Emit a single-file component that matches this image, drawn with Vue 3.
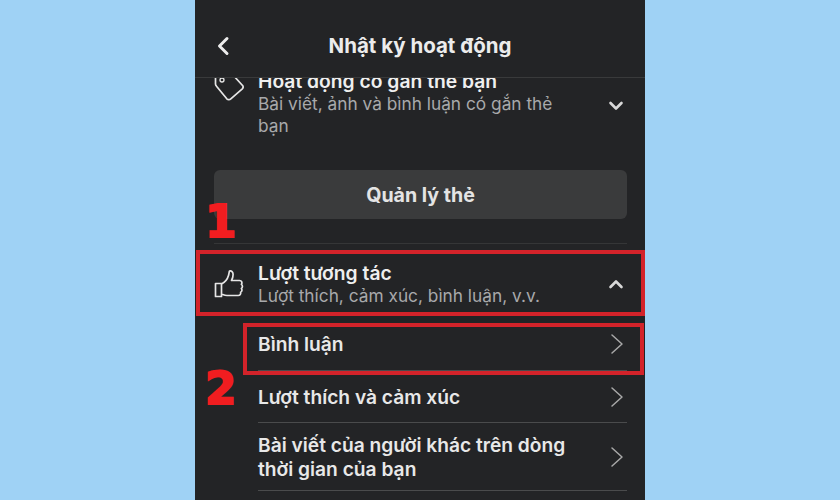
<script setup>
const subItems = [
  { id: 1, lines: ['Bình luận'], cls: 'row-a' },
  { id: 2, lines: ['Lượt thích và cảm xúc'], cls: 'row-b' },
  { id: 3, lines: ['Bài viết của người khác trên dòng', 'thời gian của bạn'], cls: 'row-c' }
]
</script>

<template>
  <div class="page">
    <div class="phone">
      <header class="header">
        <svg class="back" width="14" height="20" viewBox="0 0 14 20" fill="none">
          <path d="M11 2.500 3.500 10l7.500 7.500" stroke="#ececec" stroke-width="3" stroke-linecap="round" stroke-linejoin="round" />
        </svg>
        <h1 class="title">Nhật ký hoạt động</h1>
      </header>

      <div class="scroll">
        <section class="group tag-group">
          <svg class="icon tag-icon" width="32" height="32" viewBox="0 0 32 32" fill="none">
            <path d="M1.500 2V11a3 3 0 0 0 1 2.200L12.800 25.800a2.800 2.800 0 0 0 4 0L28.300 15.800a2.600 2.600 0 0 0 0-3.600L19 2" stroke="#e6e6e6" stroke-width="1.700" stroke-linejoin="round" />
            <circle cx="8" cy="7" r="2" stroke="#e6e6e6" stroke-width="1.300" />
          </svg>
          <div class="text">
            <div class="name">Hoạt động có gắn thẻ bạn</div>
            <div class="desc">Bài viết, ảnh và bình luận có gắn thẻ<br />bạn</div>
          </div>
          <svg class="caret" width="16" height="12" viewBox="0 0 16 12" fill="none">
            <path d="M2.500 3 8 8.500 13.500 3" stroke="#d8d8d8" stroke-width="2.600" stroke-linecap="round" stroke-linejoin="round" />
          </svg>
        </section>

        <button class="manage">Quản lý thẻ</button>
        <div class="divider top-divider"></div>

        <section class="group like-group">
          <svg class="icon" width="30" height="30" viewBox="0 0 30 30" fill="none">
            <path d="M1.500 14.500h6v13h-6zM7.500 15c3 -1.500 6 -5 7 -8.500.5-1.800.6-3.500 1-4.500 2-.6 3.600 1 3.600 3.500 0 2.500-.8 4.500-1.600 6h8c2.300 0 3.100 2.400 1.900 3.900 1.400 1 1.400 3.100 0 4.100.9 1.200.7 3-.8 3.800.5 1.700-.6 3.200-2.400 3.200H13c-2.500 0-4-1-5.500-1.500" stroke="#e6e6e6" stroke-width="1.700" stroke-linejoin="round" />
          </svg>
          <div class="text">
            <div class="name">Lượt tương tác</div>
            <div class="desc">Lượt thích, cảm xúc, bình luận, v.v.</div>
          </div>
          <svg class="caret" width="16" height="12" viewBox="0 0 16 12" fill="none">
            <path d="M2.500 9 8 3.500 13.500 9" stroke="#d8d8d8" stroke-width="2.600" stroke-linecap="round" stroke-linejoin="round" />
          </svg>
        </section>

        <ul class="list">
          <li v-for="item in subItems" :key="item.id" class="row" :class="item.cls">
            <span class="row-label">
              <span v-for="line in item.lines" :key="line" class="row-line">{{ line }}</span>
            </span>
            <svg class="chev" width="14" height="24" viewBox="0 0 14 24" fill="none">
              <path d="M2 3l10 9-10 9" stroke="#a8a8a8" stroke-width="1.500" stroke-linecap="round" stroke-linejoin="round" />
            </svg>
          </li>
        </ul>
      </div>

      <div class="mark mark-one"></div>
      <div class="mark mark-two"></div>
      <span class="num num-one">1</span>
      <span class="num num-two">2</span>
    </div>
  </div>
</template>

<style scoped>
.page {
  width: 840px;
  height: 500px;
  background: #9fd2f5;
  display: flex;
  justify-content: center;
  overflow: hidden;
  font-family: Inter, "Liberation Sans", sans-serif;
}
.phone {
  position: relative;
  width: 450px;
  height: 500px;
  background: #232426;
  display: flex;
  flex-direction: column;
  overflow: hidden;
}
.header {
  flex: none;
  height: 78px;
  box-sizing: border-box;
  border-bottom: 1px solid #393a3b;
  display: flex;
  align-items: center;
  justify-content: center;
  padding-top: 14px;
  position: relative;
}
.back {
  position: absolute;
  left: 21px;
  top: 36px;
}
.title {
  margin: 0;
  font-size: 20.500px;
  font-weight: 700;
  color: #ececec;
}
.scroll {
  flex: 1;
  overflow: hidden;
}
.group {
  display: flex;
  padding: 0 21px 0 19px;
}
.tag-group {
  margin-top: -8px;
  height: 69px;
  align-items: flex-start;
}
.tag-icon {
  margin-top: 3px;
}
.icon {
  flex: none;
}
.text {
  flex: 1;
  margin-left: 12px;
}
.like-group .text {
  margin-left: 14px;
}
.name {
  font-size: 19.300px;
  line-height: 22px;
  font-weight: 600;
  color: #efefef;
}
.desc {
  font-size: 17.300px;
  line-height: 22px;
  color: #a8a9ab;
  margin-top: 1px;
}
.caret {
  flex: none;
  align-self: center;
}
.tag-group .caret {
  margin-top: 2px;
}
.manage {
  display: block;
  width: 413px;
  height: 49px;
  margin: 31px 0 0 19px;
  border: 0;
  border-radius: 6px;
  background: #3a3b3c;
  color: #e4e4e4;
  font-family: inherit;
  font-size: 19.600px;
  font-weight: 700;
}
.divider {
  margin-left: 19px;
  width: 413px;
  height: 1px;
  background: #353637;
}
.top-divider {
  margin-top: 24px;
}
.like-group {
  height: 60px;
  margin-top: 10px;
  align-items: center;
}
.list {
  list-style: none;
  margin: 0 0 0 63px;
  padding: 0;
  width: 369px;
}
.row {
  display: flex;
  align-items: center;
  justify-content: space-between;
  border-bottom: 1px solid #4a4b4c;
  padding-right: 3px;
  box-sizing: border-box;
  color: #e8e8e8;
  font-size: 19.200px;
  font-weight: 600;
}
.row-a { height: 57px; padding-top: 4px; }
.row-b { height: 52px; }
.row-c { height: 68px; }
.row-label {
  display: flex;
  flex-direction: column;
  line-height: 24px;
}
.row-line {
  display: block;
}
.mark {
  position: absolute;
  border: 4px solid #d3232a;
  box-sizing: border-box;
  pointer-events: none;
}
.mark-one {
  left: 1px;
  top: 250px;
  width: 449px;
  height: 66px;
}
.mark-two {
  left: 48px;
  top: 323px;
  width: 401px;
  height: 52px;
}
.num {
  position: absolute;
  color: #f11d20;
  font-family: "DejaVu Sans", sans-serif;
  font-weight: 700;
  line-height: 1;
  -webkit-text-stroke: 2px #f11d20;
}
.num-one {
  left: 10px;
  top: 199px;
  font-size: 45px;
}
.num-two {
  left: 10px;
  top: 366px;
  font-size: 45px;
}
</style>
